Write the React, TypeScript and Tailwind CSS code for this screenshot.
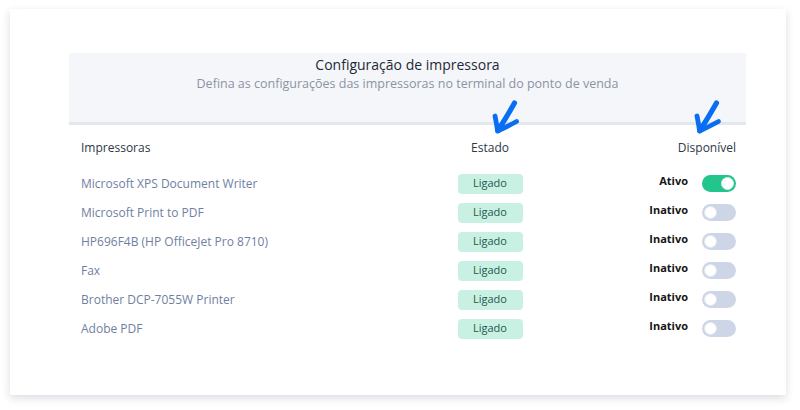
import React from 'react';

const printers = [
  { name: 'Microsoft XPS Document Writer', active: true },
  { name: 'Microsoft Print to PDF', active: false },
  { name: 'HP696F4B (HP OfficeJet Pro 8710)', active: false },
  { name: 'Fax', active: false },
  { name: 'Brother DCP-7055W Printer', active: false },
  { name: 'Adobe PDF', active: false },
];

const Arrow: React.FC<{ className: string }> = ({ className }) => (
  <svg className={className} width="28" height="34" viewBox="0 0 28 34" fill="none">
    <path d="M22.5 3 C 18 11, 12 21, 6 30.5" stroke="#0a6ef2" strokeWidth="5.2" strokeLinecap="round" />
    <path d="M3 16 C 4 21, 5 26, 5.5 31 C 12 28, 19 24.5, 24.5 21.5" stroke="#0a6ef2" strokeWidth="4.8" strokeLinecap="round" strokeLinejoin="round" />
  </svg>
);

const Toggle: React.FC<{ on: boolean }> = ({ on }) => (
  <div
    className={`w-[34px] h-[17px] rounded-full flex items-center px-[2px] ${on ? 'bg-[#22c58b] justify-end' : 'bg-[#cdd6e6] justify-start'}`}
  >
    <div className="w-[13px] h-[13px] rounded-full bg-white border border-[#e3e8f0]"></div>
  </div>
);

export default function App() {
  return (
    <div className="w-[800px] h-[410px] bg-white pt-[9px] pl-[10px]" style={{ fontFamily: '"Open Sans", "Noto Sans", sans-serif' }}>
      <div className="w-[776px] h-[386px] bg-white shadow-[0_3px_8px_rgba(30,40,70,0.16)] pt-[44px] pl-[59px] pr-[40px]">
        <div className="relative">
          <div className="h-[72px] bg-[#f5f6f9] border-b-[3px] border-[#e3e7ee] flex flex-col items-center pt-[2px]">
            <h2 className="text-[14px] leading-[20px] font-medium text-[#1f2937]">Configuração de impressora</h2>
            <p className="text-[12.5px] leading-[18px] text-[#8b93a5]">Defina as configurações das impressoras no terminal do ponto de venda</p>
          </div>

          <Arrow className="absolute left-[423px] top-[47px]" />
          <Arrow className="absolute left-[625px] top-[47px]" />

          <div className="pl-3 pr-[10px] mt-[8px]">
            <div className="flex items-center h-[30px] text-[12px] font-medium text-[#2d3748]">
              <div className="flex-1">Impressoras</div>
              <div className="w-[100px] text-center">Estado</div>
              <div className="w-[196px] text-right">Disponível</div>
            </div>
            <div className="mt-[6px]">
              {printers.map(p => (
                <div key={p.name} className="flex items-center h-[29px]">
                  <div className="flex-1 text-[12px] text-[#6f7fa1]">{p.name}</div>
                  <div className="w-[100px] flex justify-center">
                    <span className="w-[65px] h-[20px] rounded-[4px] bg-[#c9f1e3] text-[#24584b] text-[11px] font-medium flex items-center justify-center">
                      Ligado
                    </span>
                  </div>
                  <div className="w-[196px] flex items-center justify-end gap-[14px]">
                    <span className="text-[11px] font-bold text-[#161616] -mt-[4px]">{p.active ? 'Ativo' : 'Inativo'}</span>
                    <Toggle on={p.active} />
                  </div>
                </div>
              ))}
            </div>
          </div>
        </div>
      </div>
    </div>
  );
}
